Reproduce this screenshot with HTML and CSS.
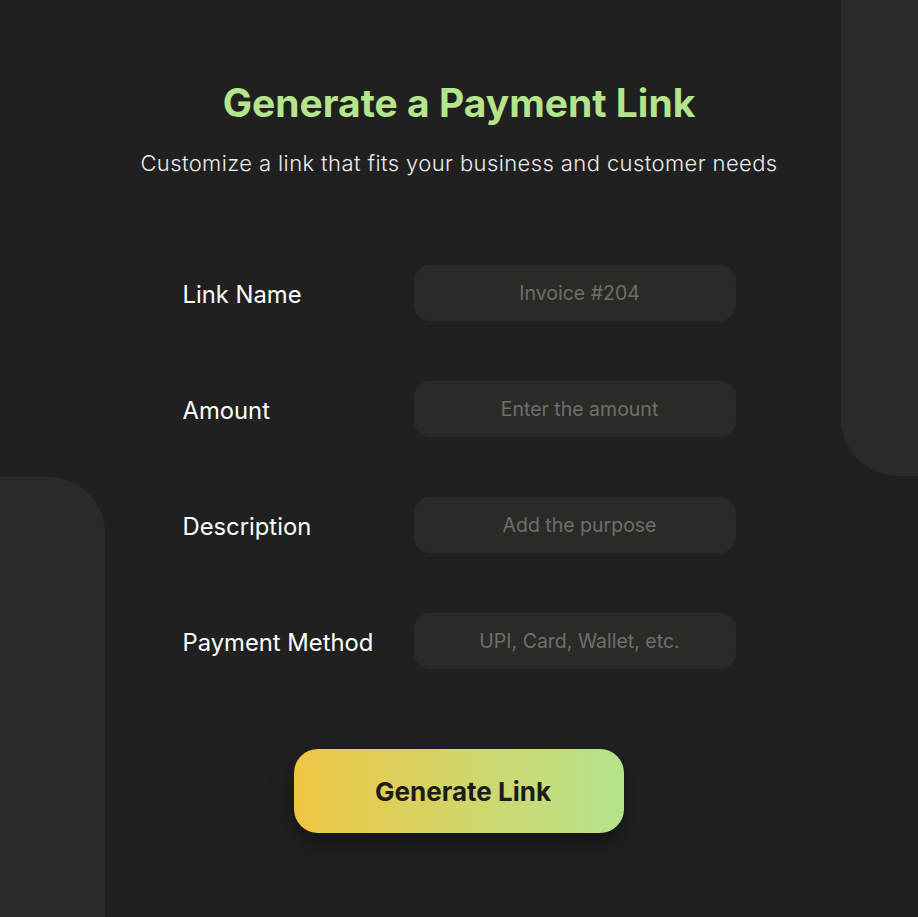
FILE: index.html
```html
<!DOCTYPE html>
<html lang="en">
<head>
    <meta charset="UTF-8">
    <meta name="viewport" content="width=device-width, initial-scale=1.0">
    <title>Generate a Payment Link</title>
    <link rel="stylesheet" href="styles.css">
</head>
<body>
    <!-- Background shapes -->
    <div class="shape shape-right"></div>
    <div class="shape shape-left"></div>

    <main class="page">
        <header class="intro">
            <h1>Generate a Payment Link</h1>
            <p>Customize a link that fits your business and customer needs</p>
        </header>

        <form class="link-form" id="linkForm">
            <label for="linkName">Link Name</label>
            <input type="text" id="linkName" placeholder="Invoice #204">

            <label for="amount">Amount</label>
            <input type="text" id="amount" placeholder="Enter the amount">

            <label for="description">Description</label>
            <input type="text" id="description" placeholder="Add the purpose">

            <label for="method">Payment Method</label>
            <input type="text" id="method" placeholder="UPI, Card, Wallet, etc.">

            <div class="button-wrapper">
                <button type="submit">Generate Link</button>
            </div>
        </form>
    </main>
</body>
</html>
```

FILE: styles.css
```css
body {
    font-family: Inter, "Noto Sans", sans-serif;
    margin: 0;
    padding: 0;
    background-color: #202020;
    color: #f2f2f2;
    min-height: 100vh;
    overflow: hidden;
}
.shape {
    position: absolute;
    background-color: #2a2b27;
}
.shape-right {
    top: 0;
    right: 0;
    width: 77px;
    height: 476px;
    border-bottom-left-radius: 58px;
}
.shape-left {
    top: 477px;
    left: 0;
    width: 105px;
    height: 440px;
    border-top-right-radius: 56px;
}
.page {
    position: relative;
    display: flex;
    flex-direction: column;
    align-items: center;
    padding-top: 79px;
}
.intro {
    text-align: center;
}
.intro h1 {
    margin: 0;
    font-size: 39px;
    font-weight: 700;
    color: #b5e48c;
}
.intro p {
    margin: 24px 0 0;
    font-size: 22px;
    font-weight: 300;
    letter-spacing: 0.4px;
    color: #ececec;
}
.link-form {
    display: grid;
    grid-template-columns: 231px 322px;
    row-gap: 60px;
    align-items: center;
    margin-top: 89px;
}
label {
    font-size: 23.8px;
    color: #ffffff;
    padding-top: 2px;
}
input {
    box-sizing: border-box;
    width: 322px;
    height: 56px;
    padding: 0 0 0 10px;
    border: none;
    border-radius: 16px;
    background-color: #2a2b27;
    color: #dddddd;
    font-family: inherit;
    font-size: 19.5px;
    text-align: center;
    outline: none;
}
input::placeholder {
    color: #6e6f6b;
}
.button-wrapper {
    grid-column: 1 / 3;
    display: flex;
    justify-content: center;
    margin-top: 20px;
}
button {
    width: 330px;
    height: 84px;
    padding: 0 0 0 8px;
    border: none;
    border-radius: 24px;
    background: linear-gradient(90deg, #f0c644, #b5e48c);
    color: #1c1c1c;
    font-family: inherit;
    font-size: 26px;
    font-weight: 700;
    cursor: pointer;
    box-shadow: 0 12px 24px rgba(0, 0, 0, 0.35);
}
```
